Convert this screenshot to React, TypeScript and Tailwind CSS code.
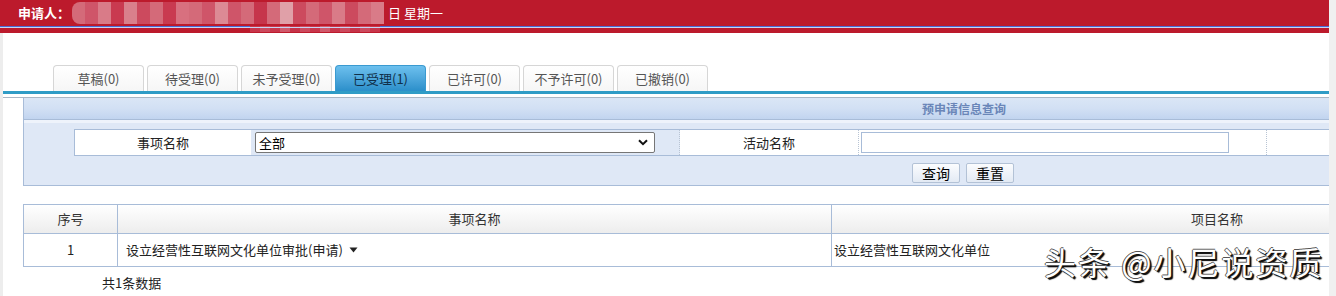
import React from "react";

const font = { fontFamily: '"Noto Sans CJK SC", "Noto Sans", sans-serif' };

const tabs = ["草稿(0)", "待受理(0)", "未予受理(0)", "已受理(1)", "已许可(0)", "不予许可(0)", "已撤销(0)"];

const mosaicTop = ["#d46a79", "#cf5569", "#d97b88", "#c93a50", "#d9808c", "#cc4a5e", "#d46a79", "#c93a50", "#d8707f", "#d46a79", "#cf5569", "#dc8a95", "#cf5569", "#d46a79", "#c6354b", "#d46a79", "#e0a0a8", "#cc4a5e", "#d46a79", "#cf5569", "#d97b88", "#cc4a5e", "#d46a79", "#d97b88"];
const mosaicBottom = ["#c8364b", "#cc4a5e", "#c8364b", "#d05a6c", "#c63349", "#cc4a5e", "#c8364b", "#d05a6c", "#c8364b", "#cc4a5e", "#c63349", "#cc4a5e", "#c8364b"];

export default function App() {
  return (
    <div className="w-[1336px] h-[296px] bg-white flex overflow-hidden relative" style={font}>
      <div className="w-[1329px] flex flex-col">
        {/* header */}
        <div className="h-[33px] bg-[#bc1a2c] flex flex-col">
          <div className="h-[26px] flex items-center pl-[18px] text-white text-[13px]">
            <span className="font-bold">申请人：</span>
            <div className="flex flex-col h-[26px] pt-[2px] ml-[2px]">
              <div className="flex rounded-l-[8px] overflow-hidden h-[22px]">
                {mosaicTop.map((c, i) => (
                  <div key={i} className="w-[13px] h-full" style={{ background: c }} />
                ))}
              </div>
            </div>
            <span className="ml-[4px]">日 星期一</span>
          </div>
          <div className="h-[1px] bg-[#4a6ad8] flex">
            <div className="w-[250px]" />
            <div className="flex">
              {mosaicBottom.map((c, i) => (
                <div key={i} className="w-[10px] h-[6px]" style={{ background: c }} />
              ))}
            </div>
          </div>
          <div className="h-[1px] bg-[#c9d3f2]" />
          <div className="h-[5px]" />
        </div>
        {/* body */}
        <div className="flex-1 flex">
          <div className="w-[3px] bg-[#ededed]" />
          <div className="flex-1 flex flex-col">
            {/* tabs */}
            <div className="pt-[32px] pl-[50px] flex gap-[3px] h-[58px] items-end">
              {tabs.map((t, i) =>
                i === 3 ? (
                  <div
                    key={t}
                    className="w-[91px] h-[26px] rounded-t-[4px] border border-b-0 border-[#3a9ad0] bg-gradient-to-b from-[#6cc0ee] to-[#2a8fca] text-[#10304a] text-[13px] flex items-center justify-center"
                  >
                    {t}
                  </div>
                ) : (
                  <div
                    key={t}
                    className="w-[91px] h-[26px] rounded-t-[4px] border border-b-0 border-[#d6d6d6] bg-gradient-to-b from-white to-[#f6f6f6] text-[#555555] text-[13px] flex items-center justify-center"
                  >
                    {t}
                  </div>
                )
              )}
            </div>
            <div className="h-[3px] bg-[#2f9cc6]" />
            <div className="h-[3px]" />
            <div className="h-[1px] bg-[#a9b6c4]" />
            {/* panel */}
            <div className="ml-[20px] border-l border-b border-[#a8bcd8] bg-[#dfe8f6] flex flex-col">
              <div className="h-[22px] bg-gradient-to-b from-[#dae6f6] via-[#d2e0f4] to-[#c1d4ef] border-b border-[#a8bcd8] flex items-center pl-[898px]">
                <span className="text-[12px] font-bold text-[#6a86b8]">预申请信息查询</span>
              </div>
              <div className="h-[3px] bg-[#eef3fb]" />
              <div className="h-[6px]" />
              <div className="ml-[50px] h-[27px] border-t border-b border-[#a8bcd8] flex">
                <div className="w-[177px] bg-white border-l border-[#a8bcd8] flex items-center justify-center text-[13px] text-[#222]">
                  事项名称
                </div>
                <div className="w-[429px] flex items-center pl-[4px] border-r border-dotted border-[#b8c4d4]">
                  <div className="w-[400px] h-[21px] bg-white border border-[#767676] rounded-[2px] flex items-center justify-between pl-[3px] pr-[6px] text-[13px] text-black">
                    <span>全部</span>
                    <svg width="10" height="7" viewBox="0 0 10 7">
                      <path d="M1 1.2 L5 5.2 L9 1.2" fill="none" stroke="#111" strokeWidth="2" />
                    </svg>
                  </div>
                </div>
                <div className="w-[179px] bg-white border-r border-dotted border-[#b8c4d4] flex items-center justify-center text-[13px] text-[#222]">
                  活动名称
                </div>
                <div className="w-[408px] bg-white border-r border-dotted border-[#b8c4d4] flex items-center pl-[2px]">
                  <div className="w-[368px] h-[21px] bg-white border border-[#a8bcd8]" />
                </div>
                <div className="flex-1 bg-white" />
              </div>
              <div className="h-[7px]" />
              <div className="flex pl-[888px] gap-[6px]">
                <div className="w-[48px] h-[20px] border border-[#b3c2d6] rounded-[2px] bg-gradient-to-b from-[#fbfcfe] to-[#e3eaf4] flex items-center justify-center text-[14px] text-black">
                  查询
                </div>
                <div className="w-[48px] h-[20px] border border-[#b3c2d6] rounded-[2px] bg-gradient-to-b from-[#fbfcfe] to-[#e3eaf4] flex items-center justify-center text-[14px] text-black">
                  重置
                </div>
              </div>
              <div className="h-[2px]" />
            </div>
            {/* table */}
            <div className="ml-[20px] mt-[18px] border-t border-l border-[#a8bcd8] flex flex-col">
              <div className="h-[29px] flex border-b border-[#a8bcd8] bg-gradient-to-b from-white to-[#ededed] text-[13px] text-[#333]">
                <div className="w-[94px] border-r border-[#a8bcd8] flex items-center justify-center">序号</div>
                <div className="w-[714px] border-r border-[#a8bcd8] flex items-center justify-center">事项名称</div>
                <div className="flex-1 flex items-center pl-[359px]">项目名称</div>
              </div>
              <div className="h-[33px] flex border-b border-[#a8bcd8] text-[13px] text-[#222]">
                <div className="w-[94px] border-r border-[#a8bcd8] flex items-center justify-center">1</div>
                <div className="w-[714px] border-r border-[#a8bcd8] flex items-center pl-[8px]">
                  <span>设立经营性互联网文化单位审批(申请)</span>
                  <svg className="ml-[6px]" width="9" height="6" viewBox="0 0 9 6">
                    <path d="M0.5 0.5 L8.5 0.5 L4.5 5.5 Z" fill="#222" />
                  </svg>
                </div>
                <div className="flex-1 flex items-center pl-[2px]">设立经营性互联网文化单位</div>
              </div>
            </div>
            <div className="pl-[99px] pt-[6px] text-[13px] text-[#222]">共1条数据</div>
          </div>
        </div>
      </div>
      <div className="w-[7px] bg-[#f0f0f0]" />
      <div
        className="absolute left-[1044px] top-[241px] text-[32px] leading-[40px] text-white tracking-[2px]"
        style={{ textShadow: "1px 1px 0 #111, -1px 0 0 #555, 0 -1px 0 #555, 2px 2px 1px #000" }}
      >
        头条 @小尼说资质
      </div>
    </div>
  );
}
